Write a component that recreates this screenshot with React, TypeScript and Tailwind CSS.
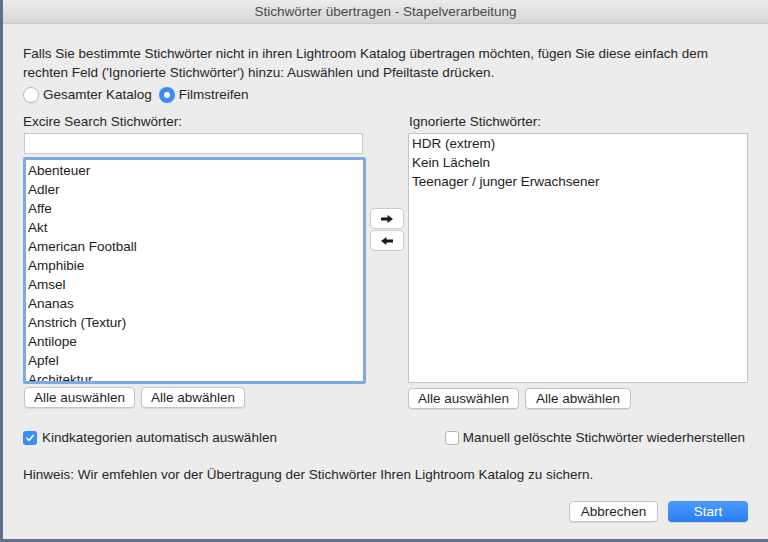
import React from "react";

const keywords = [
  "Abenteuer",
  "Adler",
  "Affe",
  "Akt",
  "American Football",
  "Amphibie",
  "Amsel",
  "Ananas",
  "Anstrich (Textur)",
  "Antilope",
  "Apfel",
  "Architektur",
];

const ignored = ["HDR (extrem)", "Kein Lächeln", "Teenager / junger Erwachsener"];

function MacButton({ children, className = "" }: { children: React.ReactNode; className?: string }) {
  return (
    <button
      type="button"
      className={`h-[21px] whitespace-nowrap rounded-[4px] border border-[#c4c4c4] bg-white px-0 text-[13.5px] leading-none text-[#1f1f1f] shadow-[0_1px_0_rgba(0,0,0,0.08)] ${className}`}
    >
      {children}
    </button>
  );
}

function ArrowIcon({ dir }: { dir: "right" | "left" }) {
  return (
    <svg width="12" height="8" viewBox="0 0 12 8" className={dir === "left" ? "rotate-180" : ""}>
      <path d="M0 2.5h6.5V0L12 4 6.5 8V5.5H0z" fill="#1a1a1a" />
    </svg>
  );
}

export default function App() {
  return (
    <div
      className="flex h-[542px] w-[768px] flex-col overflow-hidden border-l-[3px] border-b-[3px] border-[#5d6f8c] bg-[#ececec] text-[13.5px] text-[#262626]"
      style={{ fontFamily: '"Liberation Sans", Arial, sans-serif' }}
    >
      <div className="flex h-[24px] shrink-0 items-center justify-center border-b border-[#c8c8c8] bg-gradient-to-b from-[#ebebeb] to-[#d6d6d6] pt-[1px] text-[13.5px] text-[#4a4a4a]">
        Stichwörter übertragen - Stapelverarbeitung
      </div>

      <div className="flex flex-1 flex-col pl-[20px] pr-[17px]">
        <p className="mt-[20px] leading-[19px]">
          Falls Sie bestimmte Stichwörter nicht in ihren Lightroom Katalog übertragen möchten, fügen Sie diese einfach dem
          <br />
          rechten Feld ('Ignorierte Stichwörter') hinzu: Auswählen und Pfeiltaste drücken.
        </p>

        <div className="mt-[4px] flex items-center leading-[18px]">
          <span className="h-[16px] w-[16px] rounded-full border border-[#b9b9b9] bg-white shadow-[0_1px_1px_rgba(0,0,0,0.06)]" />
          <span className="ml-[4px]">Gesamter Katalog</span>
          <span className="ml-[7px] flex h-[16px] w-[16px] items-center justify-center rounded-full bg-[#3b8cf5]">
            <span className="h-[6px] w-[6px] rounded-full bg-white" />
          </span>
          <span className="ml-[4px]">Filmstreifen</span>
        </div>

        <div className="mt-[9px] flex">
          <div className="flex w-[343px] flex-col">
            <div className="leading-[18px]">Excire Search Stichwörter:</div>
            <div className="ml-[1px] mt-[2px] h-[21px] w-[339px] border border-[#c9c9c9] bg-white" />
            <div className="mt-[3px] h-[227px] w-[343px] overflow-hidden rounded-[2px] border-[3px] border-[#7fa9e3] bg-white px-[2px] pt-[1px]">
              {keywords.map((k) => (
                <div key={k} className="h-[19px] leading-[19px] text-[#1d1d1d]">
                  {k}
                </div>
              ))}
            </div>
            <div className="mt-[3px] flex gap-[6px] pl-[1px]">
              <MacButton className="w-[111px]">Alle auswählen</MacButton>
              <MacButton className="w-[104px]">Alle abwählen</MacButton>
            </div>
          </div>

          <div className="ml-[4px] flex w-[34px] flex-col pt-[95px]">
            <button type="button" className="flex h-[21px] w-[34px] items-center justify-center rounded-[4px] border border-[#cbcbcb] bg-white">
              <ArrowIcon dir="right" />
            </button>
            <button type="button" className="mt-[1px] flex h-[21px] w-[34px] items-center justify-center rounded-[4px] border border-[#cbcbcb] bg-white">
              <ArrowIcon dir="left" />
            </button>
          </div>

          <div className="ml-[4px] flex flex-1 flex-col">
            <div className="pl-[1px] leading-[18px]">Ignorierte Stichwörter:</div>
            <div className="mt-[2px] h-[250px] w-[340px] border border-[#c4c4c4] bg-white px-[3px]">
              {ignored.map((k) => (
                <div key={k} className="h-[19px] leading-[19px] text-[#1d1d1d]">
                  {k}
                </div>
              ))}
            </div>
            <div className="mt-[5px] flex gap-[6px]">
              <MacButton className="w-[111px]">Alle auswählen</MacButton>
              <MacButton className="w-[106px]">Alle abwählen</MacButton>
            </div>
          </div>
        </div>

        <div className="mt-[19px] flex items-center justify-between">
          <div className="flex items-center">
            <span className="flex h-[14px] w-[14px] items-center justify-center rounded-[3px] bg-[#3b8cf5]">
              <svg width="10" height="10" viewBox="0 0 10 10">
                <path d="M2 5.2l2 2.3L8.2 2.4" fill="none" stroke="#fff" strokeWidth="1.6" strokeLinecap="round" strokeLinejoin="round" />
              </svg>
            </span>
            <span className="ml-[5px]">Kindkategorien automatisch auswählen</span>
          </div>
          <div className="flex items-center pr-[6px]">
            <span className="h-[14px] w-[14px] rounded-[3px] border border-[#b5b5b5] bg-white" />
            <span className="ml-[4px]">Manuell gelöschte Stichwörter wiederherstellen</span>
          </div>
        </div>

        <p className="mt-[18px] leading-[18px]">
          Hinweis: Wir emfehlen vor der Übertragung der Stichwörter Ihren Lightroom Katalog zu sichern.
        </p>

        <div className="mt-[17px] flex justify-end gap-[10px] pr-[3px]">
          <MacButton className="w-[89px]">Abbrechen</MacButton>
          <button
            type="button"
            className="h-[21px] w-[80px] rounded-[4px] bg-gradient-to-b from-[#4c9bfb] to-[#2a7cf2] text-[13.5px] leading-none text-white shadow-[0_1px_0_rgba(0,0,0,0.1)]"
          >
            Start
          </button>
        </div>
      </div>
    </div>
  );
}
